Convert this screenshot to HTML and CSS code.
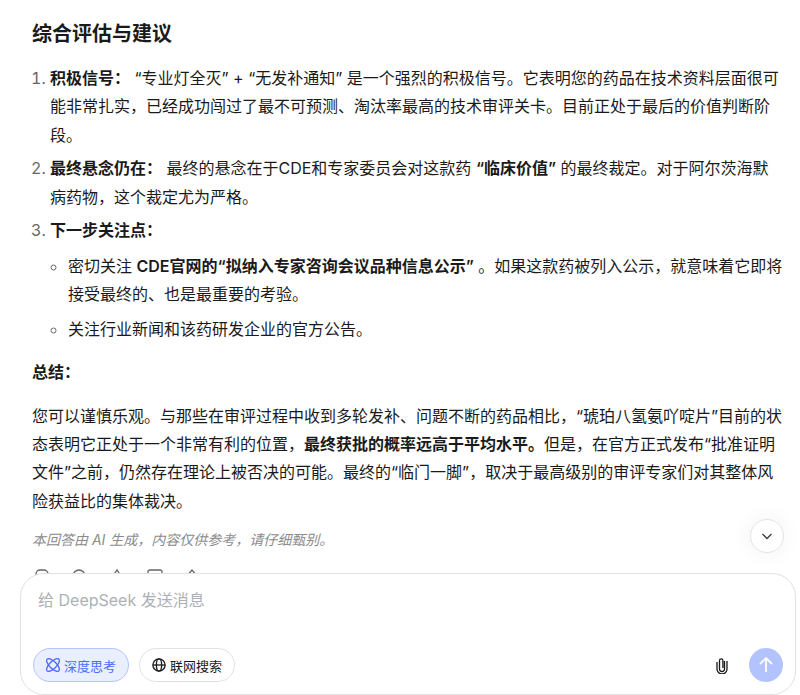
FILE: index.html
```html
<!DOCTYPE html>
<html lang="zh-CN">
<head>
    <meta charset="UTF-8">
    <meta name="viewport" content="width=device-width, initial-scale=1.0">
    <title>DeepSeek</title>
    <link rel="stylesheet" href="styles.css">
</head>
<body>
    <div class="chat">
        <h3 class="answer-title">综合评估与建议</h3>
        <ol class="answer-list">
            <li><strong>积极信号：</strong> “专业灯全灭” + “无发补通知” 是一个强烈的积极信号。它表明您的药品在技术资料层面很可能非常扎实，已经成功闯过了最不可预测、淘汰率最高的技术审评关卡。目前正处于最后的价值判断阶段。</li>
            <li><strong>最终悬念仍在：</strong> 最终的悬念在于CDE和专家委员会对这款药 <strong>“临床价值”</strong> 的最终裁定。对于阿尔茨海默病药物，这个裁定尤为严格。</li>
            <li><strong>下一步关注点：</strong>
                <ul class="answer-sublist">
                    <li>密切关注 <strong>CDE官网的“拟纳入专家咨询会议品种信息公示”</strong> 。如果这款药被列入公示，就意味着它即将接受最终的、也是最重要的考验。</li>
                    <li>关注行业新闻和该药研发企业的官方公告。</li>
                </ul>
            </li>
        </ol>
        <p class="answer-para"><strong>总结：</strong></p>
        <p class="answer-para">您可以谨慎乐观。与那些在审评过程中收到多轮发补、问题不断的药品相比，“琥珀八氢氨吖啶片”目前的状态表明它正处于一个非常有利的位置，<strong>最终获批的概率远高于平均水平。</strong>但是，在官方正式发布“批准证明文件”之前，仍然存在理论上被否决的可能。最终的“临门一脚”，取决于最高级别的审评专家们对其整体风险获益比的集体裁决。</p>
        <p class="disclaimer">本回答由 AI 生成，内容仅供参考，请仔细甄别。</p>
        <div class="msg-actions">
            <svg viewBox="0 0 20 20"><rect x="4" y="3" width="12" height="14" rx="4"/></svg>
            <svg viewBox="0 0 20 20"><circle cx="9" cy="9" r="6"/></svg>
            <svg viewBox="0 0 20 20"><path d="M4 12l6-9 6 9"/></svg>
            <svg viewBox="0 0 20 20"><rect x="3" y="3" width="14" height="14" rx="2"/></svg>
            <svg viewBox="0 0 20 20"><path d="M5 9l5-6 5 6z"/></svg>
        </div>
    </div>

    <button class="scroll-btn" aria-label="Scroll to bottom">
        <svg viewBox="0 0 16 16" width="16" height="16"><path d="M3.5 6l4.5 4.5L12.5 6"/></svg>
    </button>

    <div class="composer">
        <div class="composer-input">给 DeepSeek 发送消息</div>
        <div class="composer-bar">
            <button class="pill pill-active">
                <svg viewBox="0 0 16 16" width="14" height="14"><ellipse cx="8" cy="8" rx="4" ry="9.5" transform="rotate(45 8 8)"/><ellipse cx="8" cy="8" rx="4" ry="9.5" transform="rotate(-45 8 8)"/></svg>
                深度思考
            </button>
            <button class="pill">
                <svg viewBox="0 0 16 16" width="14" height="14"><circle cx="8" cy="8" r="7"/><ellipse cx="8" cy="8" rx="3" ry="7"/><path d="M1 8h14"/></svg>
                联网搜索
            </button>
            <svg class="clip" viewBox="0 0 16 18" width="16" height="18"><path d="M10.5 5v8a2.5 2.5 0 0 1-5 0V4.5a1.7 1.7 0 0 1 3.4 0v7.5"/><path d="M3 6v7a5 5 0 0 0 10 0V5"/></svg>
            <button class="send-btn" aria-label="Send">
                <svg viewBox="0 0 20 20" width="20" height="20"><path d="M10 17V3.5M4 9l6-6 6 6"/></svg>
            </button>
        </div>
    </div>
</body>
</html>
```

FILE: styles.css
```css
html, body {
    height: 100%;
    margin: 0;
    overflow: hidden;
}

body {
    position: relative;
    font-family: Inter, "Noto Sans CJK SC", sans-serif;
    font-size: 16px;
    line-height: 28.4px;
    color: #1a1a1a;
    background-color: #fff;
}

.chat {
    width: 752px;
    padding: 19px 0 0 32px;
}

.answer-title {
    margin: 0 0 15px;
    font-size: 20px;
    line-height: 30px;
    font-weight: 600;
}

strong {
    font-weight: 600;
}

.answer-list {
    margin: 0;
    padding-left: 18px;
}

.answer-list > li {
    margin-bottom: 5px;
}

.answer-list > li::marker {
    color: #666;
}

.answer-sublist {
    margin: 7.6px 0 0;
    padding-left: 18px;
    list-style: circle;
}

.answer-sublist > li {
    margin-bottom: 6px;
}

.answer-sublist > li::marker {
    color: #666;
}

.answer-para {
    margin: 15px 0;
}

.disclaimer {
    margin: 0;
    font-size: 14px;
    line-height: 20px;
    font-style: italic;
    color: #8b8b8b;
}

.msg-actions {
    display: flex;
    gap: 17.5px;
    margin-top: 17px;
}

.msg-actions svg {
    width: 20px;
    height: 20px;
    fill: none;
    stroke: #666;
    stroke-width: 1.3;
}

.scroll-btn {
    position: absolute;
    left: 750px;
    top: 519px;
    width: 34px;
    height: 34px;
    display: flex;
    align-items: center;
    justify-content: center;
    padding: 0;
    background-color: #fff;
    border: 1px solid #e4e4e7;
    border-radius: 50%;
    box-shadow: 0 0 24px rgba(0, 0, 0, 0.06);
}

.scroll-btn svg {
    fill: none;
    stroke: #404040;
    stroke-width: 1.4;
}

.composer {
    position: absolute;
    left: 20px;
    top: 573px;
    width: 776px;
    height: 122px;
    box-sizing: border-box;
    padding: 12px;
    display: flex;
    flex-direction: column;
    justify-content: space-between;
    background-color: #fff;
    border: 1px solid #e2e2e5;
    border-radius: 24px;
}

.composer-input {
    padding-left: 5px;
    color: #adb0b6;
}

.composer-bar {
    display: flex;
    align-items: center;
    gap: 10px;
}

.pill {
    display: flex;
    align-items: center;
    gap: 4px;
    height: 34px;
    padding: 0 12px;
    font-family: inherit;
    font-size: 13px;
    color: #1a1a1a;
    background-color: #fff;
    border: 1px solid #e2e2e5;
    border-radius: 17px;
}

.pill svg {
    fill: none;
    stroke: currentColor;
    stroke-width: 1.5;
}

.pill-active {
    color: #4d6bfe;
    background-color: #e9effe;
    border-color: #b3c6fd;
}

.clip {
    margin-left: auto;
    margin-right: 9px;
    fill: none;
    stroke: #1a1a1a;
    stroke-width: 1.3;
}

.send-btn {
    width: 34px;
    height: 34px;
    display: flex;
    align-items: center;
    justify-content: center;
    padding: 0;
    background-color: #b2c3ff;
    border: none;
    border-radius: 50%;
}

.send-btn svg {
    fill: none;
    stroke: #fff;
    stroke-width: 1.8;
}
```
